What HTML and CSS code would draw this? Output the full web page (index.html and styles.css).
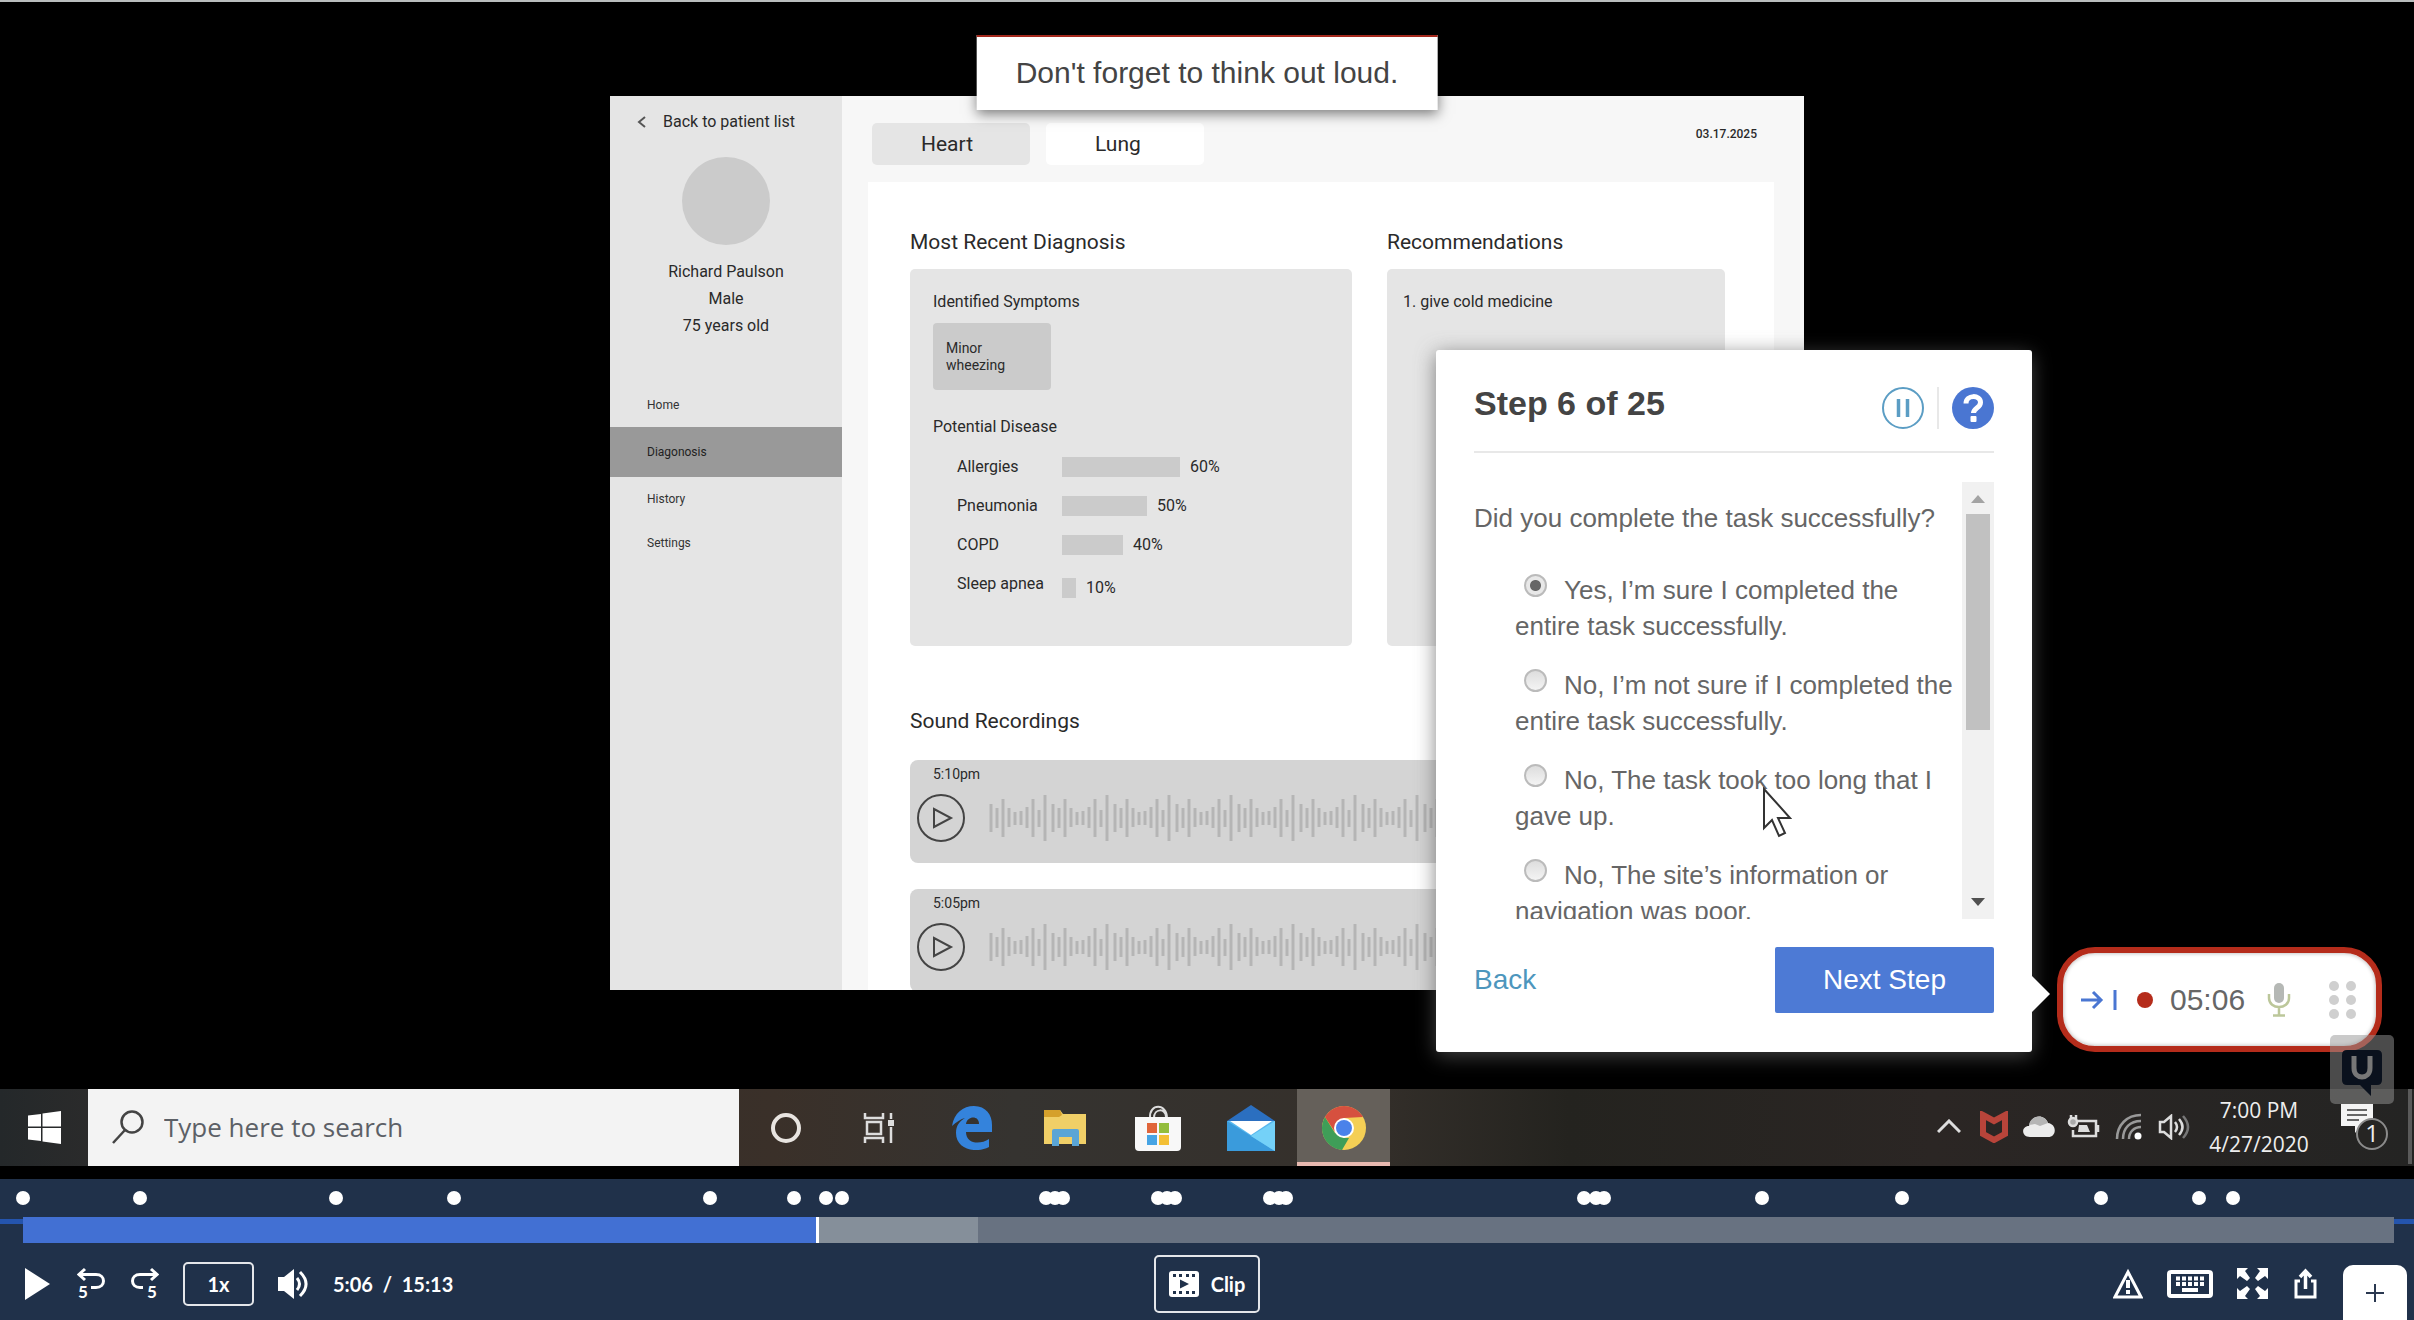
FILE: index.html
```html
<!DOCTYPE html>
<html lang="en">
<head>
<meta charset="utf-8">
<title>Session recording</title>
<link rel="stylesheet" href="styles.css">
</head>
<body>
<div class="page">
  <section class="video">
    <div class="stage">
      <div class="app">
        <aside class="sidebar">
          <a class="back-link" href="#">
            <svg width="10" height="12" viewBox="0 0 10 12"><path d="M8 1 2 6l6 5" fill="none" stroke="#555" stroke-width="2"/></svg>
            Back to patient list
          </a>
          <div class="avatar"></div>
          <div class="patient"><p>Richard Paulson</p><p>Male</p><p>75 years old</p></div>
          <nav class="side-nav">
            <a href="#">Home</a>
            <a href="#" class="active">Diagonosis</a>
            <a href="#">History</a>
            <a href="#">Settings</a>
          </nav>
        </aside>
        <div class="main">
          <header class="main-head">
            <button class="tab selected" type="button">Heart</button>
            <button class="tab" type="button">Lung</button>
            <span class="date">03.17.2025</span>
          </header>
          <div class="panel">
            <div class="columns">
              <section>
                <h2>Most Recent Diagnosis</h2>
                <div class="box diagnosis">
                  <h3>Identified Symptoms</h3>
                  <div class="symptom">Minor<br>wheezing</div>
                  <h3>Potential Disease</h3>
                  <div class="bars">
                    <div class="bar-row"><span class="bar-label">Allergies</span><span class="bar" style="width:118px"></span><span>60%</span></div>
                    <div class="bar-row"><span class="bar-label">Pneumonia</span><span class="bar" style="width:85px"></span><span>50%</span></div>
                    <div class="bar-row"><span class="bar-label">COPD</span><span class="bar" style="width:61px"></span><span>40%</span></div>
                    <div class="bar-row tall"><span class="bar-label">Sleep apnea</span><span class="bar" style="width:14px"></span><span>10%</span></div>
                  </div>
                </div>
              </section>
              <section>
                <h2>Recommendations</h2>
                <div class="box recommend">1. give cold medicine</div>
              </section>
            </div>
            <h2 class="sound-title">Sound Recordings</h2>
            <div class="recording">
              <span class="rec-time">5:10pm</span>
              <div class="rec-row">
                <svg class="rec-play" width="48" height="50" viewBox="0 0 48 50"><circle cx="24" cy="25" r="23" fill="none" stroke="#444" stroke-width="2"/><path d="M17 16v18l17-9z" fill="none" stroke="#444" stroke-width="2"/></svg>
                <svg class="wave" height="48">
                  <defs><pattern id="wave" width="62" height="48" patternUnits="userSpaceOnUse">
                    <path d="M2 10v28M8 14v20M14 5v38M20 14v19M26 18v13M32 17v14M38 13v21M44 5v38M50 16v17M56 1v46" stroke="#b5b5b5" stroke-width="3"/>
                  </pattern></defs>
                  <rect width="100%" height="48" fill="url(#wave)"/>
                </svg>
              </div>
            </div>
            <div class="recording">
              <span class="rec-time">5:05pm</span>
              <div class="rec-row">
                <svg class="rec-play" width="48" height="50" viewBox="0 0 48 50"><circle cx="24" cy="25" r="23" fill="none" stroke="#444" stroke-width="2"/><path d="M17 16v18l17-9z" fill="none" stroke="#444" stroke-width="2"/></svg>
                <svg class="wave" height="48"><rect width="100%" height="48" fill="url(#wave)"/></svg>
              </div>
            </div>
          </div>
        </div>
      </div>

      <div class="toast">Don't forget to think out loud.</div>

      <form class="survey">
        <header class="survey-head">
          <h1>Step 6 of 25</h1>
          <button type="button" class="round" aria-label="Pause"><svg width="42" height="42" viewBox="0 0 42 42"><circle cx="21" cy="21" r="20" fill="#fff" stroke="#5b9dc4" stroke-width="2"/><path d="M16.500 12v18M25.500 12v18" stroke="#5b9dc4" stroke-width="3.500"/></svg></button>
          <span class="split"></span>
          <button type="button" class="round" aria-label="Help"><svg width="42" height="42" viewBox="0 0 42 42"><circle cx="21" cy="21" r="21" fill="#4a76d2"/><path d="M14 16.500c0-9 14.500-9 14.500-1 0 5.500-7 5.500-7 10.500" fill="none" stroke="#fff" stroke-width="5"/><rect x="18.500" y="29" width="6" height="6" rx="1" fill="#fff"/></svg></button>
        </header>
        <div class="survey-body">
          <fieldset class="answers">
            <legend>Did you complete the task successfully?</legend>
            <label><input type="radio" name="done" checked>Yes, I’m sure I completed the<br>entire task successfully.</label>
            <label><input type="radio" name="done">No, I’m not sure if I completed the<br>entire task successfully.</label>
            <label><input type="radio" name="done">No, The task took too long that I<br>gave up.</label>
            <label><input type="radio" name="done">No, The site’s information or<br>navigation was poor.</label>
          </fieldset>
          <div class="scrollbar">
            <svg width="14" height="8" viewBox="0 0 14 8"><path d="M0 8l7-8 7 8z" fill="#a3a3a3"/></svg>
            <div class="thumb"></div>
            <svg class="down" width="14" height="8" viewBox="0 0 14 8"><path d="M0 0l7 8 7-8z" fill="#505050"/></svg>
          </div>
        </div>
        <footer class="survey-foot">
          <a href="#">Back</a>
          <button type="button" class="next">Next Step</button>
        </footer>
      </form>

      <svg class="cursor" width="32" height="52" viewBox="0 0 32 52"><path d="M2 2v39l8-8 7 16 6-3-7-15h12z" fill="#fff" stroke="#333" stroke-width="2"/></svg>

      <div class="recorder">
        <svg width="36" height="24" viewBox="0 0 36 24"><path d="M0 12h20M12 4l8 8-8 8M34 2v20" fill="none" stroke="#4a76d2" stroke-width="3"/></svg>
        <span class="rec-dot"></span>
        <span class="rec-clock">05:06</span>
        <svg width="24" height="34" viewBox="0 0 24 34"><rect x="7" y="0" width="10" height="20" rx="5" fill="#b5b8b5"/><path d="M2 11v4c0 12 20 12 20 0v-4M12 24v8M6 32.500h12" fill="none" stroke="#bcc79a" stroke-width="2.500"/></svg>
        <svg class="grip" width="28" height="40" viewBox="0 0 28 40" fill="#cfcfcf"><circle cx="5" cy="6" r="5"/><circle cx="22" cy="6" r="5"/><circle cx="5" cy="20" r="5"/><circle cx="22" cy="20" r="5"/><circle cx="5" cy="34" r="5"/><circle cx="22" cy="34" r="5"/></svg>
      </div>
    </div>

    <div class="taskbar">
      <button type="button" class="start" aria-label="Start"><svg width="33" height="33" viewBox="0 0 33 33" fill="#fff"><path d="M0 4.500 13 3v12.500H0zM14.500 2.500 33 0v15.500H14.500zM0 17h13v13L0 28.500zM14.500 17H33v16l-18.500-2.500z"/></svg></button>
      <label class="search">
        <svg width="32" height="34" viewBox="0 0 32 34"><circle cx="20" cy="12" r="10.500" fill="none" stroke="#444" stroke-width="2.500"/><path d="M13 20 1 33" stroke="#444" stroke-width="2.500"/></svg>
        <input type="text" placeholder="Type here to search" aria-label="Type here to search">
      </label>
      <button type="button" class="task" aria-label="Cortana"><svg width="32" height="32" viewBox="0 0 32 32"><circle cx="16" cy="16" r="13" fill="none" stroke="#e8e4e0" stroke-width="4"/></svg></button>
      <button type="button" class="task" aria-label="Task view"><svg width="32" height="32" viewBox="0 0 32 32" fill="none" stroke="#ddd" stroke-width="2.500"><path d="M2 1v5h18V1M2 31v-5h18v5M4 10h14v12H4zM28 1v6M28 15v16"/><path d="M25 11h6" stroke-width="6"/></svg></button>
      <button type="button" class="task" aria-label="Edge"><svg width="40" height="44" viewBox="0 0 40 44"><path d="M0 20C2 7 11 0 22 0c12 0 18 9 18 19v7H14c0 12 14 13 23 7v8c-14 7-33 2-33-14 0-8 4-12 9-15-4 1-9 4-13 8zM14 18h13c0-9-12-8-13 0z" fill="#3483dc"/></svg></button>
      <button type="button" class="task" aria-label="Files"><svg width="42" height="38" viewBox="0 0 42 38"><path d="M0 1h16l3 4h23v30H0z" fill="#f0cf67"/><path d="M0 1h16l2 5-3 2H0z" fill="#d5a02b"/><path d="M8 37V22q0-2 2-2h23q2 0 2 2v15h-7v-9H15v9z" fill="#5aa5d6"/></svg></button>
      <button type="button" class="task" aria-label="Store"><svg width="46" height="46" viewBox="0 0 46 46"><path d="M15 13C14-2 32-2 32 13M19 13c0-10 12-10 12-1" fill="none" stroke="#ddd" stroke-width="2"/><path d="M0 12h46v30q0 4-4 4H4q-4 0-4-4z" fill="#f8f8f8"/><path d="M12 18h10v10H12z" fill="#e0653a"/><path d="M24 18h10v10H24z" fill="#93bd3c"/><path d="M12 30h10v10H12z" fill="#46a4e4"/><path d="M24 30h10v10H24z" fill="#f3bf35"/></svg></button>
      <button type="button" class="task" aria-label="Mail"><svg width="48" height="46" viewBox="0 0 48 46"><path d="M0 16 24 0l24 16z" fill="#2b6fc0"/><path d="M0 16h48v30H0z" fill="#58b8ee"/><path d="M3 16h42L24 30z" fill="#fff"/><path d="M0 16l24 15 24 15H0z" fill="#3a9bdc"/><path d="M48 16 24 31l24 15z" fill="#74d1f8"/></svg></button>
      <button type="button" class="task open" aria-label="Chrome"><svg width="44" height="44" viewBox="0 0 44 44"><circle cx="22" cy="22" r="22" fill="#f4cf55"/><path d="M3 11 13 27 22 32h5L20 44A22 22 0 0 1 3 11z" fill="#3f9e58"/><path d="M3 11A22 22 0 0 1 41 11l-19 1-9 14z" fill="#d6503f"/><circle cx="22" cy="22" r="10" fill="#fff"/><circle cx="22" cy="22" r="8" fill="#4a82ea"/></svg></button>
      <div class="tray">
        <span class="tray-icon"><svg width="24" height="15" viewBox="0 0 24 15"><path d="M1 13 12 2l11 11" fill="none" stroke="#ddd" stroke-width="3"/></svg></span>
        <span class="tray-icon"><svg width="28" height="32" viewBox="0 0 28 32"><path d="M3 4l11 6 11-6v19l-11 6-11-6z" fill="none" stroke="#b8443a" stroke-width="6"/></svg></span>
        <span class="tray-icon"><svg width="32" height="22" viewBox="0 0 32 22"><path d="M7 21C-2 21-2 10 6 10 8-2 22-2 25 7c9 1 9 14 0 14z" fill="#ececec"/><path d="M6 9C8-2 22-2 25 7l-8 3-5-2z" fill="#b5b5b5"/></svg></span>
        <span class="tray-icon"><svg width="34" height="24" viewBox="0 0 34 24" fill="none" stroke="#ddd" stroke-width="2.500"><path d="M10 6h19v15H6v-6M31 10v7M4 0v4M9 0v4"/><circle cx="6" cy="7" r="4" fill="#aaa"/><path d="M12 10h8l3 7H11z" fill="#ddd" stroke="none"/></svg></span>
        <span class="tray-icon"><svg width="27" height="27" viewBox="0 0 27 27" fill="none" stroke="#999" stroke-width="2.500"><path d="M2 26C2 12 12 2 26 2M8 26C8 15 15 8 26 8M14 26c0-7 5-12 12-12"/><circle cx="23" cy="23" r="3.500" fill="#fff" stroke="none"/></svg></span>
        <span class="tray-icon"><svg width="32" height="26" viewBox="0 0 32 26" fill="none" stroke="#ddd" stroke-width="2.500"><path d="M2 8h4l7-6v22l-7-6H2zM17 8q4 5 0 10M21 5q7 8 0 16"/><path d="M25 2q10 11 0 22" stroke="#777"/></svg></span>
        <div class="clock"><span>7:00 PM</span><span>4/27/2020</span></div>
        <svg class="notice" width="48" height="48" viewBox="0 0 48 48"><path d="M0 1h32v22H20l-6 7v-7H0z" fill="#f4f4f4"/><path d="M6 7h20M6 12h20M6 17h12" stroke="#666" stroke-width="2"/><circle cx="31" cy="31" r="15" fill="#262523" stroke="#8b8b8b" stroke-width="2"/><text x="31" y="39" text-anchor="middle" class="notice-count">1</text></svg>
        <span class="peek"></span>
      </div>
    </div>

    <div class="watermark"><svg width="40" height="52" viewBox="0 0 40 52"><path d="M5 0h30q5 0 5 5v25q0 5-5 5h-6v11l-11-11H5q-5 0-5-5V5q0-5 5-5z" fill="#0a111d"/><path d="M12 6v12c0 12 16 12 16 0V6" fill="none" stroke="#777" stroke-width="5"/></svg></div>
  </section>

  <section class="player">
    <div class="markers">
      <i style="left:0%"></i><i style="left:4.930%"></i><i style="left:13.220%"></i><i style="left:18.160%"></i><i style="left:28.980%"></i><i style="left:32.520%"></i><i style="left:33.850%"></i><i style="left:34.530%"></i><i style="left:43.150%"></i><i style="left:43.530%"></i><i style="left:43.860%"></i><i style="left:47.870%"></i><i style="left:48.250%"></i><i style="left:48.590%"></i><i style="left:52.600%"></i><i style="left:52.980%"></i><i style="left:53.270%"></i><i style="left:65.840%"></i><i style="left:66.340%"></i><i style="left:66.680%"></i><i style="left:73.340%"></i><i style="left:79.250%"></i><i style="left:87.640%"></i><i style="left:91.760%"></i><i style="left:93.210%"></i>
    </div>
    <div class="track-wrap">
      <div class="track">
        <div class="played" style="width:33.570%"></div>
        <div class="buffered" style="width:6.700%"></div>
      </div>
    </div>
    <div class="controls">
      <div class="controls-left">
        <button type="button" aria-label="Play"><svg width="29" height="32" viewBox="0 0 29 32"><path d="M1 0l25 16L1 32z" fill="#fff"/></svg></button>
        <button type="button" aria-label="Back 5 seconds"><svg width="29" height="38" viewBox="0 -3 29 38"><path d="M3 6.500h16c10 0 10 13 0 13h-5M8 1 2 6.500 8 12" fill="none" stroke="#fff" stroke-width="3"/><text x="1" y="30" class="five">5</text></svg></button>
        <button type="button" aria-label="Forward 5 seconds"><svg width="29" height="38" viewBox="0 -3 29 38"><path d="M26 6.500H10c-10 0-10 13 0 13h3M21 1l6 5.500-6 5.500" fill="none" stroke="#fff" stroke-width="3"/><text x="17" y="30" class="five">5</text></svg></button>
        <button type="button" class="outlined speed">1x</button>
        <button type="button" aria-label="Volume"><svg width="31" height="30" viewBox="0 0 31 30"><path d="M0 8h6l10-8v30L6 22H0z" fill="#fff"/><path d="M19 9q5 6 0 12M22 3q12 12 0 24" fill="none" stroke="#fff" stroke-width="3"/></svg></button>
        <span class="time">5:06&nbsp; /&nbsp; 15:13</span>
      </div>
      <button type="button" class="outlined clip"><svg width="30" height="26" viewBox="0 0 30 26"><rect width="30" height="26" rx="3" fill="#fff"/><path d="M4 4.500h3M10 4.500h3M17 4.500h3M23 4.500h3M4 21.500h3M10 21.500h3M17 21.500h3M23 21.500h3" stroke="#20314a" stroke-width="3"/><path d="M11 8.500v9l9-4.500z" fill="#20314a"/></svg>Clip</button>
      <div class="controls-right">
        <button type="button" aria-label="Report a problem"><svg width="30" height="31" viewBox="0 0 30 31"><path d="M15 4 28 29H2z" fill="none" stroke="#fff" stroke-width="3"/><path d="M15 12v8M15 22v4" stroke="#fff" stroke-width="4"/></svg></button>
        <button type="button" aria-label="Keyboard shortcuts"><svg width="46" height="28" viewBox="0 0 46 28"><rect x="2" y="2" width="42" height="24" rx="2" fill="none" stroke="#fff" stroke-width="4"/><path d="M9 8.500h28M9 14h28" stroke="#fff" stroke-width="4" stroke-dasharray="4 2"/><path d="M15 20h16" stroke="#fff" stroke-width="4"/></svg></button>
        <button type="button" aria-label="Full screen"><svg width="31" height="31" viewBox="0 0 31 31"><path d="M0 0h11L8 3l5 7-3 3-7-5-3 3zM31 0v11l-3-3-7 5-3-3 5-7-3-3zM0 31V20l3 3 7-5 3 3-5 7 3 3zM31 31H20l3-3-5-7 3-3 7 5 3-3z" fill="#fff"/></svg></button>
        <button type="button" aria-label="Share"><svg width="27" height="31" viewBox="0 0 27 31"><path d="M8 13H4v16h19V13h-4" fill="none" stroke="#fff" stroke-width="3"/><path d="M13.500 21V4M8 9l5.500-6L19 9" fill="none" stroke="#fff" stroke-width="3.500"/></svg></button>
        <button type="button" class="add" aria-label="Add note"><svg width="18" height="18" viewBox="0 0 18 18"><path d="M9 0v18M0 9h18" stroke="#2a3850" stroke-width="2"/></svg></button>
      </div>
    </div>
  </section>
</div>
</body>
</html>
```
FILE: styles.css
```css
* { box-sizing: border-box; }
body { margin: 0; background: #000; }
p, h1, h2, h3 { margin: 0; font-weight: 400; }
button { padding: 0; border: 0; background: none; font: inherit; color: inherit; }
svg { display: block; flex: none; }
a { text-decoration: none; color: inherit; }

.page { display: flex; flex-direction: column; min-height: 100vh; border-top: 2px solid #b9bdbd; }
.video { position: relative; flex: 1; display: flex; flex-direction: column; padding-bottom: 13px; background: #000; }
.stage { position: relative; flex: 1; display: flex; justify-content: center; padding: 94px 0 99px; }

/* patient app */
.app { display: flex; width: 100%; max-width: 1194px; height: 894px; overflow: hidden; background: #f7f7f7; font: 16px/20px Roboto, sans-serif; color: #2a2a2a; }
.sidebar { flex: none; width: 232px; padding-top: 16px; background: #e5e5e5; }
.back-link { display: flex; align-items: center; gap: 16px; padding-left: 27px; }
.avatar { width: 88px; height: 88px; margin: 25px auto 13px; border-radius: 50%; background: #cbcbcb; }
.patient { text-align: center; line-height: 27px; }
.side-nav { margin-top: 44px; font-size: 12px; color: #333; }
.side-nav a { display: flex; align-items: center; height: 44px; padding-left: 37px; }
.side-nav .active { height: 50px; background: #999; color: #222; }
.main { flex: 1; display: flex; flex-direction: column; padding: 27px 30px 0 26px; }
.main-head { display: flex; gap: 16px; padding: 0 17px 17px 4px; }
.tab { width: 158px; height: 42px; padding-left: 49px; border-radius: 5px; background: #fff; font-size: 21px; text-align: left; }
.tab.selected { background: #e5e5e5; }
.date { margin-left: auto; font-size: 12px; font-weight: 500; line-height: 22px; }
.panel { flex: 1; padding: 48px 49px 0 42px; background: #fff; }
.columns { display: grid; grid-template-columns: 442fr 338fr; gap: 35px; }
h2 { font-size: 21px; line-height: 24px; }
h3 { font-size: 16px; line-height: 20px; }
.box { height: 377px; margin-top: 15px; padding: 23px; border-radius: 5px; background: #e5e5e5; }
.recommend { padding: 23px 16px; }
.symptom { width: 118px; height: 67px; margin: 11px 0 27px; padding: 17px 13px; border-radius: 4px; background: #cbcbcb; font-size: 14px; line-height: 17px; }
.bars { display: grid; gap: 19px; margin: 20px 0 0 24px; }
.bar-row { display: flex; align-items: center; height: 20px; }
.bar-row.tall { height: 24px; align-items: flex-end; }
.bar-label { width: 105px; align-self: flex-start; }
.bar { height: 20px; margin-right: 10px; background: #cbcbcb; }
.sound-title { margin: 63px 0 27px; }
.recording { height: 103px; margin-bottom: 26px; padding: 4px 0 0 7px; border-radius: 8px; background: #d4d4d4; }
.rec-time { display: block; padding-left: 16px; font-size: 14px; }
.rec-row { display: flex; align-items: center; gap: 24px; margin-top: 9px; }
.wave { flex: 1; }

/* overlays on the recorded screen */
.toast { position: absolute; top: 33px; left: 50%; transform: translateX(-50%); padding: 0 39px 2px; border-top: 2px solid #a3281c; background: #fff; box-shadow: 0 4px 12px rgba(0,0,0,.5); font: 30px/71px "Liberation Sans", Arial, sans-serif; color: #444; white-space: nowrap; }
.survey { position: absolute; right: 382px; bottom: 37px; width: 596px; height: 702px; padding: 0 38px; border-radius: 3px; background: #fff; box-shadow: 0 4px 20px rgba(90,90,90,.75); font: 26px/36px "Liberation Sans", Arial, sans-serif; color: #666; }
.survey::after { content: ""; position: absolute; right: -18px; top: 626px; border: 18px solid transparent; border-right: 0; border-left-color: #fff; }
.survey-head { display: flex; align-items: center; gap: 13px; height: 103px; padding-top: 14px; border-bottom: 2px solid #e8e8e8; }
.survey-head h1 { flex: 1; padding-bottom: 10px; font-size: 34px; font-weight: 700; color: #444; }
.split { width: 2px; height: 42px; background: #e8e8e8; }
.survey-body { display: flex; height: 437px; margin-top: 29px; overflow: hidden; }
.answers { flex: 1; min-width: 0; margin: 0; padding: 0; border: 0; white-space: nowrap; }
.answers legend { margin-bottom: 36px; padding: 18px 0 0; }
.answers label { display: block; margin-bottom: 23px; padding-left: 41px; }
.answers input { appearance: none; width: 23px; height: 23px; margin: 0 17px 0 9px; vertical-align: 2px; border: 2px solid #bbb; border-radius: 50%; background: linear-gradient(#ddd, #f4f4f4); }
.answers input:checked { background: radial-gradient(circle, #666 0 5px, #e8e8e8 6px); }
.scrollbar { display: flex; flex-direction: column; align-items: center; flex: none; width: 32px; padding: 13px 0; background: #f1f1f1; }
.thumb { width: 24px; height: 216px; margin-top: 11px; background: #c1c1c1; }
.down { margin-top: auto; }
.survey-foot { display: flex; align-items: center; justify-content: space-between; margin-top: 28px; font-size: 28px; }
.survey-foot a { color: #4d96bd; }
.next { width: 219px; height: 66px; border-radius: 2px; background: #4d7ad5; color: #fff; }
.cursor { position: absolute; right: 620px; bottom: 250px; }
.recorder { position: absolute; right: 32px; bottom: 37px; display: flex; align-items: center; width: 325px; height: 105px; padding: 0 19px 0 18px; border: 6px solid #b52c1b; border-radius: 38px; background: #fff; box-shadow: inset 0 0 4px #aaa; }
.rec-dot { width: 16px; height: 16px; margin: 0 17px 0 20px; border-radius: 50%; background: #b52c1b; }
.rec-clock { flex: 1; font: 30px/36px "Liberation Sans", Arial, sans-serif; color: #666; }
.grip { margin-left: 38px; }
.watermark { position: absolute; right: 20px; bottom: 75px; display: flex; justify-content: center; width: 64px; height: 69px; padding-top: 15px; border-radius: 5px; background: rgba(150,150,150,.5); }

/* desktop taskbar */
.taskbar { display: flex; height: 77px; background: linear-gradient(90deg, #24282a 0, #2b2b2b 4%, #3a3029 32%, #353330 42%, #35302b 56%, #24231f 65%, #2b2624 80%, #242423 100%); }
.start { display: flex; align-items: center; justify-content: center; width: 88px; }
.search { display: flex; align-items: center; gap: 20px; flex: 0 1 651px; padding: 0 0 2px 24px; background: #f3f3f3; }
.search input { flex: 1; min-width: 0; padding: 0; border: 0; background: none; font: 26px/36px "Open Sans", sans-serif; color: #555; }
.search input::placeholder { color: #5c6066; opacity: 1; }
.task { display: flex; align-items: center; justify-content: center; flex: none; width: 93px; }
.task.open { background: #65605a; border-top: 4px solid transparent; border-bottom: 4px solid #e8b9b0; }
.tray { display: flex; align-items: center; margin-left: auto; padding: 0 2px 2px 0; }
.tray-icon { display: flex; justify-content: center; width: 45px; }
.clock { display: flex; flex-direction: column; align-items: center; width: 104px; margin: 0 30px 0 11px; font: 21px/34px "Open Sans", sans-serif; color: #eee; }
.notice-count { font: 24px "Open Sans", sans-serif; fill: #eee; }
.peek { width: 4px; height: 75px; margin-left: 19px; background: #5a5a5a; }

/* player bar */
.player { background: #20314a; color: #fff; font: 700 20px/28px Lato, sans-serif; }
.markers { position: relative; height: 38px; margin: 0 20px 0 23px; }
.markers i { position: absolute; top: 12px; width: 14px; height: 14px; margin-left: -7px; border-radius: 50%; background: #fff; }
.track-wrap { padding: 0 20px 0 23px; background: linear-gradient(#2454ad, #2454ad) 0 2px / 100% 5px no-repeat; }
.track { display: flex; height: 26px; background: #687281; }
.played { border-right: 3px solid #fff; background: #4270d3; }
.buffered { background: #858f9a; }
.controls { display: grid; grid-template-columns: 1fr auto 1fr; align-items: center; height: 77px; padding: 4px 7px 0; }
.controls-left, .controls-right { display: flex; align-items: center; gap: 24px; }
.controls-left { padding-left: 17px; }
.controls-right { justify-content: flex-end; height: 73px; }
.five { font: 700 17px Lato, sans-serif; fill: #fff; }
.outlined { border: 2px solid #e4e6ea; border-radius: 5px; }
.speed { width: 71px; height: 44px; }
.clip { display: flex; align-items: center; gap: 12px; height: 58px; padding: 0 13px; }
.add { display: flex; align-items: center; justify-content: center; align-self: flex-end; width: 64px; height: 55px; border-radius: 10px 10px 0 0; background: #fff; }
```
